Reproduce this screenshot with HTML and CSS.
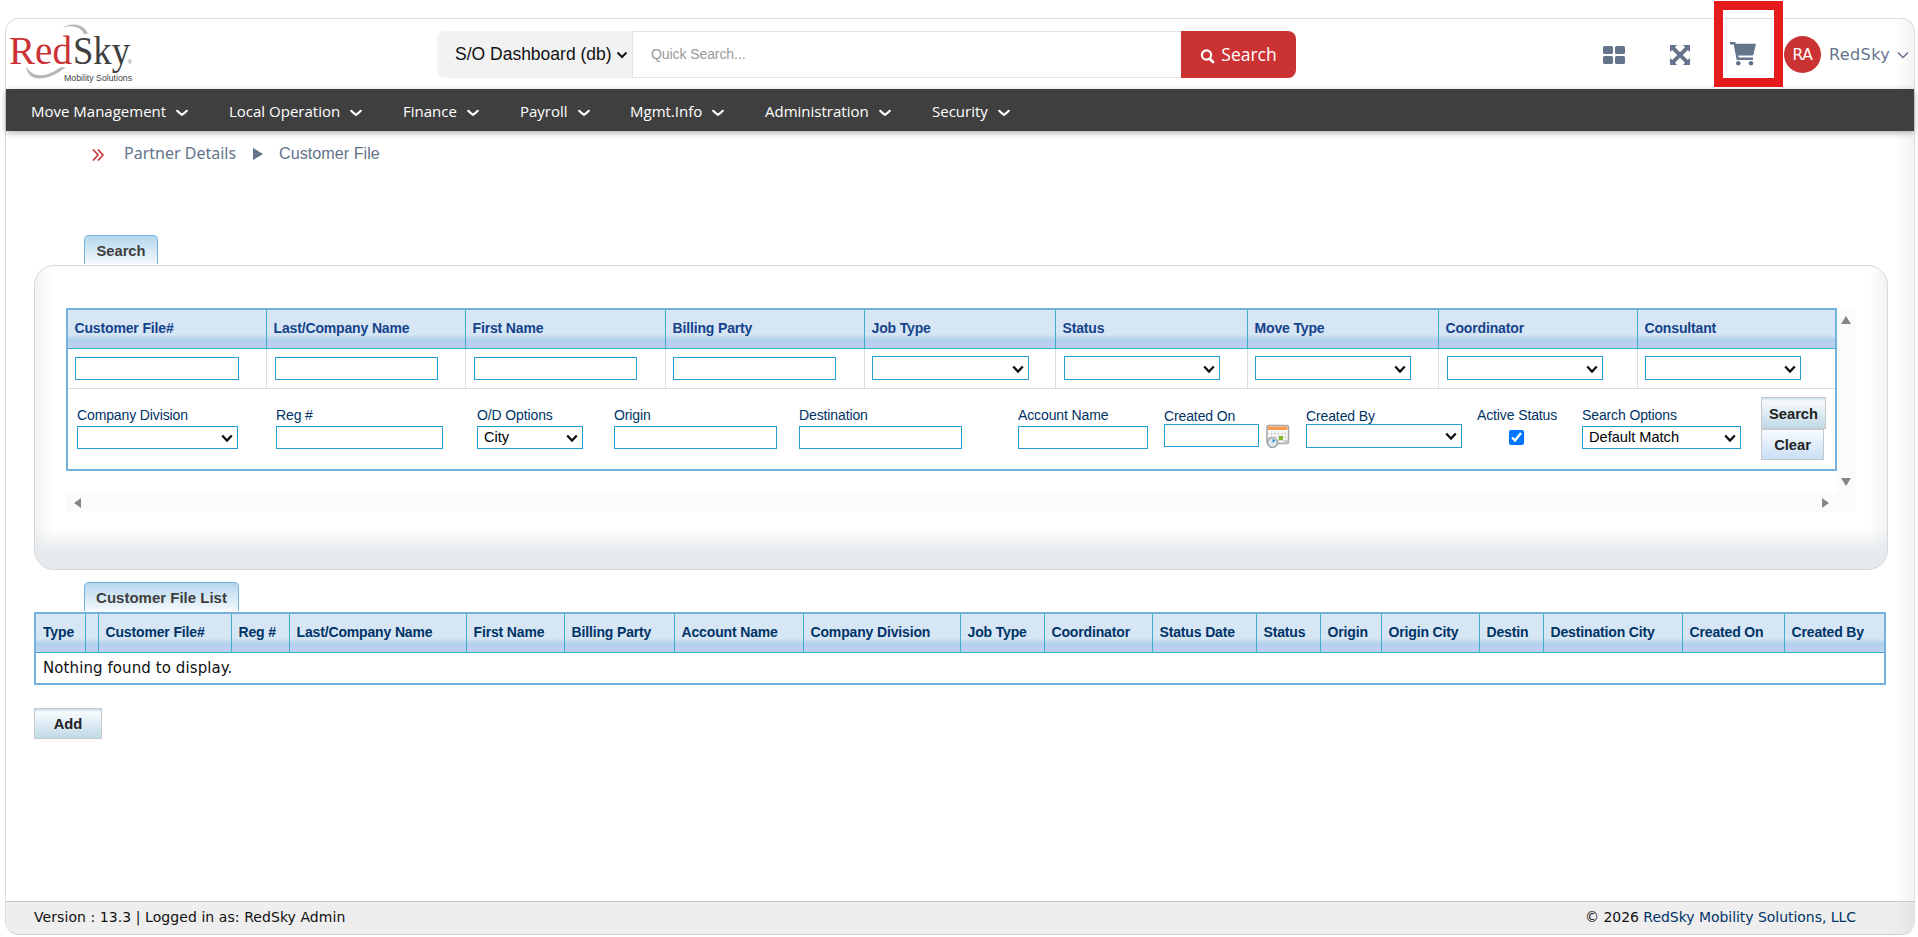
FILE: index.html
```html
<!DOCTYPE html>
<html lang="en">
<head>
<meta charset="utf-8">
<title>Customer File List</title>
<link rel="stylesheet" href="styles.css">
</head>
<body>
<svg width="0" height="0" class="defs">
  <symbol id="chev" viewBox="0 0 12 8"><path d="M1.200 1.800 Q3.500 4.200 6 5.900 Q8.500 4.200 10.800 1.800" fill="none" stroke="#fff" stroke-width="2.100" stroke-linecap="round"/></symbol>
</svg>
<div class="frame">
  <header class="top">
    <svg class="logo" viewBox="0 0 126 62" width="126" height="62">
      <path d="M53 5 C64 -2 76 2 79 11 L75 11 C72 4 63 1 53 5Z" fill="#b5b7b9"/>
      <path d="M17 43 C18 58 36 61 57 44 L51 44.500 C36 56 22 54 17 43Z" fill="#b5b7b9"/>
      <text x="0" y="41" class="logo-word" fill="#cb3234" textLength="63" lengthAdjust="spacingAndGlyphs">Red</text>
      <text x="64" y="41" class="logo-word" fill="#3f3f3f" textLength="57" lengthAdjust="spacingAndGlyphs">Sky</text>
      <text x="119" y="41" class="logo-reg">®</text>
      <text x="55" y="58" class="logo-sub" textLength="68" lengthAdjust="spacingAndGlyphs">Mobility Solutions</text>
    </svg>
    <div class="quick">
      <select class="quick-select"><option>S/O Dashboard (db)</option></select>
      <input class="quick-input" placeholder="Quick Search...">
      <button class="quick-btn"><svg width="15" height="16" viewBox="0 0 15 16"><circle cx="6.500" cy="7" r="4.600" fill="none" stroke="#fff" stroke-width="2.200"/><path d="M10 11 L13 14" stroke="#fff" stroke-width="2.800" stroke-linecap="round"/></svg><span>Search</span></button>
    </div>
    <div class="tools">
      <svg class="t-grid" width="22" height="18" viewBox="0 0 22 18" fill="#64748b"><rect width="10" height="8" rx="1.500"/><rect x="12" width="10" height="8" rx="1.500"/><rect y="10" width="10" height="8" rx="1.500"/><rect x="12" y="10" width="10" height="8" rx="1.500"/></svg>
      <svg class="t-expand" width="20" height="20" viewBox="0 0 20 20" fill="#64748b"><path d="M0 0h7L5 2.200 10 7.200 15 2.200 13 0h7v7l-2.200-2L12.800 10l5 5 2.200-2v7h-7l2-2.200-5-5-5 5L7 20H0v-7l2.200 2 5-5-5-5L0 7z"/></svg>
      <div class="mark"><svg width="26" height="24" viewBox="0 0 26 24" fill="#64748b"><path d="M0 0h4.600c.6 0 .9.300 1 .9l.2.800H26l-2.500 10.500c-.2.800-.7 1.200-1.500 1.200H8.300l.4 2.200H23v2.400H7.600c-.7 0-1-.4-1.100-1L3.700 2.400H0z"/><circle cx="8.300" cy="21.200" r="2.300"/><circle cx="21" cy="21.200" r="2.300"/></svg></div>
      <span class="avatar">RA</span>
      <span class="user">RedSky</span>
      <svg width="12" height="8" viewBox="0 0 12 8"><path d="M1 1.500 L6 6.500 L11 1.500" fill="none" stroke="#64748b" stroke-width="1.500"/></svg>
    </div>
  </header>
  <nav class="nav">
    <a>Move Management<svg><use href="#chev"/></svg></a>
    <a>Local Operation<svg><use href="#chev"/></svg></a>
    <a>Finance<svg><use href="#chev"/></svg></a>
    <a>Payroll<svg><use href="#chev"/></svg></a>
    <a>Mgmt.Info<svg><use href="#chev"/></svg></a>
    <a>Administration<svg><use href="#chev"/></svg></a>
    <a>Security<svg><use href="#chev"/></svg></a>
  </nav>
  <main class="main">
    <div class="crumbs">
      <svg width="12" height="12" viewBox="0 0 12 12"><path d="M1 .5 L6 6 L1 11.500 M6 .5 L11 6 L6 11.500" fill="none" stroke="#cb3234" stroke-width="1.600"/></svg>
      <span class="c1">Partner Details</span>
      <i class="tri"></i>
      <span class="c2">Customer File</span>
    </div>
    <div class="tab tab-search">Search</div>
    <section class="panel">
      <div class="scroll">
        <div class="form">
          <div class="cols head">
            <b>Customer File#</b><b>Last/Company Name</b><b>First Name</b><b>Billing Party</b><b>Job Type</b><b>Status</b><b>Move Type</b><b>Coordinator</b><b>Consultant</b>
          </div>
          <div class="cols fields">
            <div><input class="w164"></div><div><input></div><div><input></div><div><input></div>
            <div><select class="w157"></select></div><div><select></select></div><div><select></select></div><div><select></select></div><div><select></select></div>
          </div>
          <div class="row2">
            <label>Company Division<select></select></label>
            <label>Reg #<input></label>
            <label>O/D Options<select><option>City</option></select></label>
            <label>Origin<input></label>
            <label>Destination<input></label>
            <label>Account Name<input></label>
            <label class="tight">Created On<input></label>
            <svg class="cal" width="24" height="25" viewBox="0 0 24 25"><rect x="1" y="1.500" width="21.500" height="18" rx="1.500" fill="#fdfdfd" stroke="#a5a5a5" stroke-width="1.500"/><rect x="2" y="2.500" width="19.500" height="3.500" fill="#f79a4f"/><path d="M2 9.500H21M2 13H21M2 16.500H21M5.500 7V19M9 7V19M12.500 7V19M16 7V19M19 7V19" stroke="#d3d3d3" stroke-width=".8"/><rect x="13" y="12" width="4" height="4" fill="#7db821"/><circle cx="6.500" cy="18.500" r="5" fill="#dce6ec" stroke="#9a9a9a" stroke-width="1.200"/><path d="M6.500 18.500V14.500L9.500 17z" fill="#1c8bd0"/><path d="M15 19.500L22.500 15V19.500Z" fill="#c4c4c4"/></svg>
            <label class="tight tall">Created By<select></select></label>
            <label class="check">Active Status<input type="checkbox" checked></label>
            <label>Search Options<select><option>Default Match</option></select></label>
            <div class="btns"><button class="btn">Search</button><button class="btn clear">Clear</button></div>
          </div>
        </div>
        <div class="vbar"><i class="up"></i><i class="down"></i></div>
        <div class="hbar"><i class="left"></i><i class="right"></i></div>
      </div>
    </section>
    <div class="tab tab-list">Customer File List</div>
    <section class="list">
      <div class="lcols">
        <b>Type</b><b></b><b>Customer File#</b><b>Reg #</b><b>Last/Company Name</b><b>First Name</b><b>Billing Party</b><b>Account Name</b><b>Company Division</b><b>Job Type</b><b>Coordinator</b><b>Status Date</b><b>Status</b><b>Origin</b><b>Origin City</b><b>Destin</b><b>Destination City</b><b>Created On</b><b>Created By</b>
      </div>
      <div class="empty">Nothing found to display.</div>
    </section>
    <button class="btn add">Add</button>
  </main>
  <footer class="foot"><span class="ver">Version : 13.3 | Logged in as: RedSky Admin</span><span class="copy">© 2026 <a>RedSky Mobility Solutions, LLC</a></span></footer>
</div>
</body>
</html>
```
FILE: styles.css
```css
* { box-sizing: border-box; }
html, body { height: 100%; }
body { margin: 0; background: #fff; font-family: "Liberation Sans", Arial, sans-serif; overflow: hidden; }
.defs { position: absolute; }
input, select, button { font-family: inherit; margin: 0; }
select { appearance: none; }

.frame { margin: 18px 0 0 5px; width: 1910px; height: 917px; border: 1px solid #dcdcdc; border-bottom-color: #ccc; border-radius: 14px; display: flex; flex-direction: column; background: linear-gradient(to left, #f3f3f3 0, #fff 20px); }

.top { height: 70px; flex: none; display: flex; align-items: flex-start; padding-left: 3px; }
.logo { flex: none; margin-top: 4px; overflow: visible; }
.logo-word { font-family: "Liberation Serif", serif; font-size: 41px; }
.logo-reg { font-size: 5px; fill: #666; }
.logo-sub { font-size: 9px; fill: #3f3f3f; }
.quick { display: flex; margin: 12px 0 0 302px; width: 859px; height: 47px; border-radius: 8px; overflow: hidden; }
.quick-select { width: 195px; border: 0; background: #f2f2f2 url("data:image/svg+xml,%3Csvg xmlns='http://www.w3.org/2000/svg' width='12' height='8'%3E%3Cpath d='M1.500 1.500L6 6L10.500 1.500' fill='none' stroke='%23111' stroke-width='2'/%3E%3C/svg%3E") no-repeat 179px 20px; font-size: 17.500px; padding: 0 0 2px 18px; color: #111; }
.quick-input { width: 549px; border: 1px solid #e5e5e5; border-right: 0; padding: 0 0 1px 18px; font-size: 14px; letter-spacing: -.08px; outline: 0; }
.quick-input::placeholder { color: #999; }
.quick-btn { flex: 1; border: 0; background: #cb3234; color: #fff; font: 17.500px "Open Sans", sans-serif; display: flex; align-items: center; justify-content: center; gap: 6px; padding: 0; }
.quick-btn svg { margin-top: 2px; }
.quick-btn span { margin-top: -1px; }
.tools { display: flex; align-items: center; height: 71px; margin-left: 307px; flex: none; }
.t-expand { margin-left: 45px; }
.mark { width: 69px; height: 86px; margin: -19px 0 0 24px; border: 9px solid #e61b1b; display: flex; align-items: center; padding: 20px 0 0 7px; position: relative; top: -1px; }
.avatar { width: 37px; height: 37px; margin-left: 1px; border-radius: 50%; background: #cb3234; color: #fff; font: 15.500px/38px "DejaVu Sans", sans-serif; text-align: center; letter-spacing: -.3px; }
.user { margin: -1px 6px 0 8px; width: 62px; font: 16px "DejaVu Sans", sans-serif; color: #64748b; letter-spacing: .4px; }

.nav { height: 42px; flex: none; background: #3f3f3f; display: grid; grid-template-columns: 198px 174px 117px 110px 135px 167px 120px; align-items: center; padding-left: 25px; color: #fff; font: 15px "Open Sans", sans-serif; box-shadow: 0 2px 6px rgba(0,0,0,.3); padding-top: 2px; }
.nav a { display: flex; align-items: center; gap: 10px; white-space: nowrap; }
.nav svg { width: 12px; height: 8px; margin-top: 4px; }

.main { flex: 1; padding-left: 28px; display: flex; flex-direction: column; align-items: flex-start; }
.crumbs { display: flex; align-items: center; height: 46px; padding-left: 58px; font-size: 16.200px; color: #64748b; margin-bottom: 58px; }
.crumbs svg { margin-top: 2px; }
.c1 { margin: 0 16px 2px 20px; width: 113px; font: 16px "Noto Sans", sans-serif; white-space: nowrap; }
.tri { border: 6px solid transparent; border-left: 10px solid #64748b; border-right: 0; margin-right: 16px; }
.c2 { margin-bottom: 2px; }

.tab { height: 29px; margin-left: 50px; border: 1px solid #72b2dc; border-bottom: 0; border-radius: 5px 5px 0 0; background: linear-gradient(#b5d7ec, #f5f9fd); color: #3f3f3f; font-weight: bold; line-height: 30px; text-align: center; white-space: nowrap; }
.tab-search { width: 74px; font-size: 14.700px; }
.tab-list { width: 155px; font-size: 15px; margin-top: 12px; }
.panel { width: 1854px; height: 305px; margin-top: 1px; border: 1px solid #d5d8da; border-radius: 20px; padding: 42px 0 0 31px; background: linear-gradient(to right, rgba(230,233,236,.6), transparent 18px, transparent 1834px, rgba(230,233,236,.6)), linear-gradient(#fff 262px, #e6eaec 288px); }
.scroll { width: 1790px; display: grid; grid-template-columns: 1771px 19px; grid-template-rows: 185px 19px; }
.form { height: 163px; border: 2px solid #72b2dc; background: #fff; }
.cols { display: grid; grid-template-columns: 199px 199px 200px 199px 191px 192px 191px 199px 1fr; }
.cols > * { border-right: 1px solid #ddd; }
.cols > :last-child, .lcols > :last-child { border-right: 0; }
.head b, .lcols b { height: 39px; font-size: 14px; letter-spacing: -.15px; line-height: 37px; white-space: nowrap; color: #15428b; padding-left: 6.500px; border-right: 1px solid #3dafcb; border-bottom: 1px solid #3dafcb; background: linear-gradient(#d6e6f5 0, #d6e6f5 24px, #a9cfe8 31px, #bbd0ee 31px); }
.fields { height: 40px; border-bottom: 1px solid #ddd; }
.fields > * { padding: 8px 0 0 7px; }
.fields > :nth-child(2), .fields > :nth-child(3), .fields > :nth-child(6), .fields > :nth-child(8) { padding-left: 8px; }
.form input, .form select { display: block; height: 23px; border: 1px solid #219dce; border-radius: 0; background: #fff; font-size: 14.600px; padding: 0 6px; color: #000; width: 100%; }
.form select { background: #fff url("data:image/svg+xml,%3Csvg xmlns='http://www.w3.org/2000/svg' width='12' height='9'%3E%3Cpath d='M1.200 1.500L6 6.500L10.800 1.500' fill='none' stroke='%23111' stroke-width='2.300'/%3E%3C/svg%3E") no-repeat right 4px top 7px; padding-bottom: 1px; }
.fields input { width: 163px; }
.fields .w164 { width: 164px; }
.fields select { width: 156px; height: 24px; margin-top: -1px; background-position: right 4px top 8px; }
.fields .w157 { width: 157px; }

.row2 { display: flex; padding: 8px 0 0 9px; }
.row2 label { font-size: 14px; letter-spacing: -.12px; color: #003366; line-height: 20px; padding-top: 8px; white-space: nowrap; }
.row2 label input, .row2 label select { margin-top: 1px; }
.row2 > :nth-child(1) { width: 161px; margin-right: 38px; }
.row2 > :nth-child(2) { width: 167px; margin-right: 34px; }
.row2 > :nth-child(3) { width: 106px; margin-right: 31px; }
.row2 > :nth-child(4) { width: 163px; margin-right: 22px; }
.row2 > :nth-child(5) { width: 163px; margin-right: 56px; }
.row2 > :nth-child(6) { width: 130px; margin-right: 16px; }
.row2 > :nth-child(7) { width: 95px; margin-right: 7px; }
.row2 > :nth-child(8) { margin: 27px 16px 0 0; }
.row2 > :nth-child(9) { width: 156px; margin-right: 15px; }
.row2 > :nth-child(10) { width: 80px; margin-right: 25px; }
.row2 > :nth-child(11) { width: 159px; margin-right: 20px; }
.row2 .tight { padding-top: 9px; }
.row2 .tight input, .row2 .tight select { margin-top: -2px; }
.row2 .tall select { height: 24px; }
.row2 .check input { width: 15px; height: 15px; margin: 5px 0 0 32px; }
.btn { display: block; height: 32px; width: 65px; padding: 0; border: 1.500px solid #c6c8ca; background: linear-gradient(#c4dcea 0, #f7fbfe 3px, #c0d9e7); font-size: 14.700px; font-weight: bold; color: #222; }
.btns .btn { padding-top: 1px; }
.clear { width: 63px; height: 31px; background: linear-gradient(#f7fbff, #c9dff5); }
.vbar, .hbar { background: #fbfbfb; display: flex; justify-content: space-between; align-items: center; }
.vbar { flex-direction: column; padding: 8px 1px 7px 0; }
.hbar { grid-column: span 2; padding: 0 27px 0 8px; }
.vbar i, .hbar i { border: 5px solid transparent; }
.vbar .up { border-top: 0; border-bottom: 8px solid #868686; }
.vbar .down { border-bottom: 0; border-top: 8px solid #868686; }
.hbar .left { border-left: 0; border-right: 7px solid #868686; }
.hbar .right { border-right: 0; border-left: 7px solid #868686; }

.list { width: 1852px; margin-top: 1px; border: 2px solid #72b2dc; background: #fff; }
.lcols { display: grid; grid-template-columns: 50px 13px 133px 58px 177px 98px 110px 129px 157px 84px 108px 104px 64px 61px 98px 64px 139px 102px 1fr; }
.lcols b { color: #003366; }
.lcols b:first-child { padding-left: 7px; }
.empty { height: 30px; padding-left: 7px; line-height: 30px; font-family: "DejaVu Sans", sans-serif; font-size: 15px; letter-spacing: .09px; color: #111; }
.add { width: 68px; height: 31px; margin-top: 23px; }

.foot { height: 33px; flex: none; display: flex; justify-content: space-between; background: linear-gradient(to left, #e4e4e4 0, #eee 20px); border-top: 1px solid #c8c8c8; border-radius: 0 0 13px 13px; padding: 0 58px 0 28px; font: 14px/30px "DejaVu Sans", sans-serif; color: #111; }
.ver { letter-spacing: .07px; }
.copy { letter-spacing: -.04px; }
.foot a { color: #003366; }
```
